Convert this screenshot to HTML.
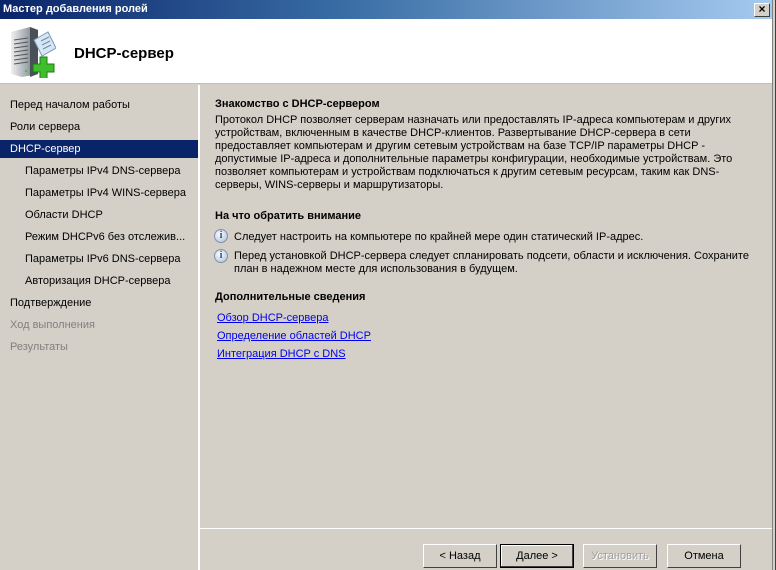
<!DOCTYPE html>
<html><head><meta charset="utf-8"><style>
*{margin:0;padding:0;box-sizing:border-box}
body{width:776px;height:570px;overflow:hidden;background:#d4d0c8;font-family:"Liberation Sans",sans-serif;font-size:11px;color:#000;position:relative}
.abs{position:absolute}
.title{left:0;top:0;width:772px;height:19px;background:linear-gradient(90deg,#0a246a 0%,#3a6ea5 45%,#a6caf0 100%);color:#fff;font-weight:bold;font-size:11px;line-height:19px;padding-left:3px}
.close{left:754px;top:3px;width:16px;height:14px;background:#d4d0c8;border:1px solid;border-color:#fff #404040 #404040 #fff;font-size:12px;font-weight:bold;line-height:11px;text-align:center;color:#000}
.hdr{left:0;top:19px;width:772px;height:65px;background:#fff;border-bottom:1px solid #c0c0c0}
.h1{left:74px;top:45px;font-size:15px;font-weight:bold}
.rb{left:772px;top:0;width:4px;height:570px;background:#d4d0c8;border-left:1px solid #808080;border-right:1px solid #404040}
.nav div{position:absolute;left:10px;white-space:nowrap}
.nav .s{left:25px}
.nav .g{color:#808080}
.sel{left:0;top:140px;width:198px;height:18px;background:#0a246a}
.vl{left:198px;top:85px;width:2px;height:485px;background:#fff}
.hl{left:200px;top:528px;width:572px;height:1px;background:#fff}
.b{font-weight:bold}
.p{left:215px;width:545px;line-height:13px}
a{color:#0000ee;text-decoration:underline}
.btn{top:544px;height:24px;width:74px;border:1px solid;border-color:#fff #404040 #404040 #fff;text-align:center;line-height:22px;background:#d4d0c8}
.info{width:14px;height:14px;border-radius:50%;background:radial-gradient(circle at 40% 35%,#fff,#a8b8d0);border:1px solid #8090b0;color:#1a4fa0;font-weight:bold;font-size:10px;line-height:12px;text-align:center;font-family:"Liberation Serif",serif}
</style></head><body>
<div class="abs title">Мастер добавления ролей</div>
<div class="abs close">×</div>
<div class="abs hdr"></div>
<svg class="abs" style="left:8px;top:24px" width="48" height="54" viewBox="0 0 48 54">
<defs><linearGradient id="sv" x1="0" x2="1"><stop offset="0" stop-color="#f0f0f0"/><stop offset="0.6" stop-color="#a0a6ae"/><stop offset="1" stop-color="#60666e"/></linearGradient></defs>
<polygon points="3,8 22,3 30,6 30,50 14,53 3,50" fill="url(#sv)"/>
<polygon points="22,3 30,6 30,50 22,53" fill="#4a5058"/>
<g stroke="#555" stroke-width="1"><line x1="6" y1="16" x2="20" y2="14"/><line x1="6" y1="20" x2="20" y2="18"/><line x1="6" y1="24" x2="20" y2="22"/><line x1="6" y1="28" x2="20" y2="26"/><line x1="6" y1="32" x2="20" y2="30"/><line x1="6" y1="36" x2="20" y2="34"/><line x1="6" y1="40" x2="20" y2="38"/></g>
<rect x="17" y="46" width="2" height="2" fill="#3c3"/>
<polygon points="26,16 40,8 48,24 34,32" fill="#d8e6f4" stroke="#7a9ab8"/>
<g stroke="#6a8ab0"><line x1="33" y1="17" x2="41" y2="13"/><line x1="34" y1="21" x2="42" y2="17"/><line x1="35" y1="25" x2="43" y2="21"/></g>
<path d="M32 33h7v7h7v8h-7v7h-7v-7h-7v-8h7z" fill="#3cbf2a" stroke="#1e7a14"/>
</svg>
<div class="abs h1">DHCP-сервер</div>
<div class="abs rb"></div>
<div class="abs sel"></div>
<div class="nav">
<div style="top:99px">Перед началом работы</div>
<div style="top:121px">Роли сервера</div>
<div style="top:143px;color:#fff">DHCP-сервер</div>
<div class="s" style="top:165px">Параметры IPv4 DNS-сервера</div>
<div class="s" style="top:187px">Параметры IPv4 WINS-сервера</div>
<div class="s" style="top:209px">Области DHCP</div>
<div class="s" style="top:231px">Режим DHCPv6 без отслежив...</div>
<div class="s" style="top:253px">Параметры IPv6 DNS-сервера</div>
<div class="s" style="top:275px">Авторизация DHCP-сервера</div>
<div style="top:297px">Подтверждение</div>
<div class="g" style="top:319px">Ход выполнения</div>
<div class="g" style="top:341px">Результаты</div>
</div>
<div class="abs vl"></div>
<div class="abs b" style="left:215px;top:98px">Знакомство с DHCP-сервером</div>
<div class="abs p" style="top:114px">Протокол DHCP позволяет серверам назначать или предоставлять IP-адреса компьютерам и других устройствам, включенным в качестве DHCP-клиентов. Развертывание DHCP-сервера в сети предоставляет компьютерам и другим сетевым устройствам на базе TCP/IP параметры DHCP - допустимые IP-адреса и дополнительные параметры конфигурации, необходимые устройствам. Это позволяет компьютерам и устройствам подключаться к другим сетевым ресурсам, таким как DNS-серверы, WINS-серверы и маршрутизаторы.</div>
<div class="abs b" style="left:215px;top:210px">На что обратить внимание</div>
<div class="abs info" style="left:214px;top:229px">i</div>
<div class="abs" style="left:234px;top:231px">Следует настроить на компьютере по крайней мере один статический IP-адрес.</div>
<div class="abs info" style="left:214px;top:249px">i</div>
<div class="abs" style="left:234px;top:250px;width:525px;line-height:13px">Перед установкой DHCP-сервера следует спланировать подсети, области и исключения. Сохраните план в надежном месте для использования в будущем.</div>
<div class="abs b" style="left:215px;top:291px">Дополнительные сведения</div>
<div class="abs" style="left:217px;top:312px"><a>Обзор DHCP-сервера</a></div>
<div class="abs" style="left:217px;top:330px"><a>Определение областей DHCP</a></div>
<div class="abs" style="left:217px;top:348px"><a>Интеграция DHCP с DNS</a></div>
<div class="abs hl"></div>
<div class="abs btn" style="left:423px">&lt; Назад</div>
<div class="abs btn" style="left:500px;border:1px solid #000;box-shadow:inset -1px -1px #404040,inset 1px 1px #fff">Далее &gt;</div>
<div class="abs btn" style="left:583px;color:#a0a0a0;text-shadow:1px 1px #fff">Установить</div>
<div class="abs btn" style="left:667px">Отмена</div>
</body></html>
